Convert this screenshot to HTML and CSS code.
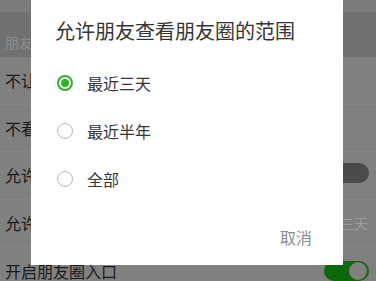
FILE: index.html
```html
<!DOCTYPE html>
<html lang="zh">
<head>
<meta charset="utf-8">
<link rel="stylesheet" href="styles.css">
</head>
<body>
<div class="page">
  <div class="topbar"></div>
  <div class="section-head"><span>朋友</span></div>
  <div class="row"><span>不让</span></div>
  <div class="row"><span>不看</span></div>
  <div class="row"><span>允许</span><span class="toggle off"><span class="knob"></span></span></div>
  <div class="row"><span>允许</span><span class="value">三天</span></div>
  <div class="row last"><span>开启朋友圈入口</span><span class="toggle on"><span class="knob"></span></span></div>
</div>
<div class="dialog">
  <div class="title">允许朋友查看朋友圈的范围</div>
  <div class="options">
    <div class="option"><span class="radio checked"></span><span>最近三天</span></div>
    <div class="option"><span class="radio"></span><span>最近半年</span></div>
    <div class="option"><span class="radio"></span><span>全部</span></div>
  </div>
  <div class="actions"><span class="cancel">取消</span></div>
</div>
</body>
</html>
```
FILE: styles.css
```css
html, body {
  margin: 0;
  padding: 0;
}
body {
  width: 376px;
  height: 281px;
  overflow: hidden;
  position: relative;
  font-family: "Noto Sans CJK SC", "Noto Sans", sans-serif;
  background: #808080;
}
.page {
  display: flex;
  flex-direction: column;
}
.topbar {
  height: 12px;
  background: #7b7b7b;
}
.section-head {
  height: 45px;
  box-sizing: border-box;
  padding: 20px 0 0 5px;
  line-height: 20px;
  font-size: 14px;
  color: #8e8e8e;
  background: #717171;
}
.row {
  height: 47.5px;
  box-sizing: border-box;
  display: flex;
  align-items: center;
  justify-content: space-between;
  padding: 0 7px 0 5px;
  font-size: 16px;
  color: #1a1a1a;
  background: #808080;
  border-bottom: 1px solid #868686;
  white-space: nowrap;
}
.row.last {
  border-bottom: none;
}
.value {
  font-size: 14px;
  color: #9c9c9c;
  margin-right: 1px;
}
.toggle {
  width: 45px;
  height: 20px;
  border-radius: 10px;
  position: relative;
  box-sizing: border-box;
}
.toggle.off {
  background: #4b4b4b;
  margin-bottom: 4px;
}
.toggle.off .knob {
  position: absolute;
  left: 1px;
  top: 1px;
  width: 18px;
  height: 18px;
  border-radius: 50%;
  background: #808080;
}
.toggle.on {
  background: #0b680b;
  margin-top: 1px;
}
.toggle.on .knob {
  position: absolute;
  right: 2px;
  top: 1px;
  width: 18px;
  height: 18px;
  border-radius: 50%;
  background: #808080;
}
.dialog {
  position: absolute;
  left: 31px;
  top: 0;
  width: 312px;
  height: 265px;
  background: #ffffff;
  display: flex;
  flex-direction: column;
}
.title {
  padding: 19px 0 0 24px;
  font-size: 20px;
  line-height: 24px;
  color: #353535;
  white-space: nowrap;
}
.options {
  margin-top: 16px;
  display: flex;
  flex-direction: column;
}
.option {
  height: 48px;
  display: flex;
  align-items: center;
  padding-left: 26px;
  gap: 14px;
  font-size: 16px;
  color: #353535;
}
.radio {
  width: 16px;
  height: 16px;
  box-sizing: border-box;
  border-radius: 50%;
  border: 1.5px solid #b8b8b8;
  position: relative;
  flex: none;
}
.radio.checked {
  border: 2px solid #2bb52b;
}
.radio.checked::after {
  content: "";
  position: absolute;
  left: 2px;
  top: 2px;
  width: 8px;
  height: 8px;
  border-radius: 50%;
  background: #2bb52b;
}
.actions {
  margin-top: 22px;
  display: flex;
  justify-content: flex-end;
  padding-right: 31px;
}
.cancel {
  font-size: 16px;
  line-height: 24px;
  color: #8c8c8c;
}
```
